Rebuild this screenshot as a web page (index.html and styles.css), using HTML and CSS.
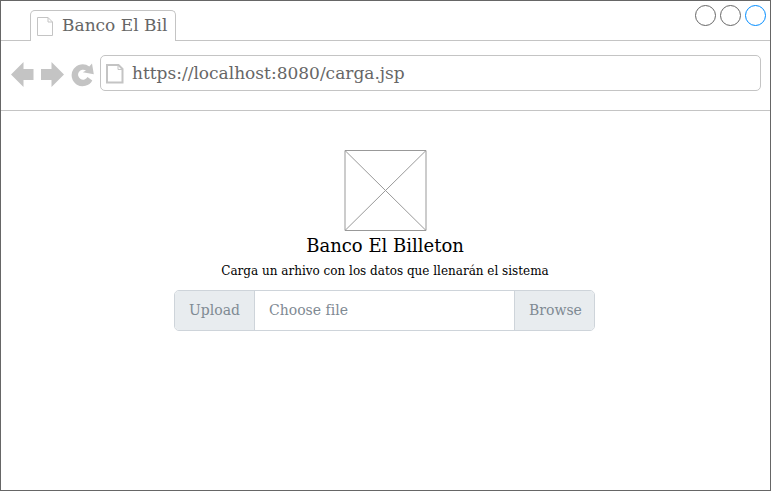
FILE: index.html
```html
<!DOCTYPE html>
<html lang="es">
<head>
<meta charset="utf-8">
<title>Banco El Billeton</title>
<link rel="stylesheet" href="styles.css">
</head>
<body>
<div class="window">
  <header class="tabs">
    <div class="tab">
      <svg class="tab-icon" width="18" height="21" viewBox="0 0 18 21"><path d="M1.500 1.500H12L16.500 6V19.500H1.500ZM12 1.500V6H16.500"/></svg>
      <span>Banco El Bil</span>
    </div>
    <div class="controls"><i></i><i></i><i class="active"></i></div>
  </header>
  <nav class="toolbar">
    <svg class="nav-icons" width="88" height="30" viewBox="8 60 88 30">
      <path d="M11 74.500L23.500 62V69H33.500V80H23.500V87Z"/>
      <path d="M64 74.500L51.500 62V69H41V80H51.500V87Z"/>
      <path d="M92 63.500L93.800 74.200L82.800 72.200L86 70.600A5 5 0 1 0 87.500 77L92.300 80.500A11 11 0 1 1 89.300 66.500Z"/>
    </svg>
    <div class="address">
      <svg class="page-icon" width="19" height="21" viewBox="0 0 19 21"><path d="M2 2H13.500L17.500 6V19.500H2Z"/><path class="fold" d="M13 2V6.500H17"/></svg>
      <span>https://localhost:8080/carga.jsp</span>
    </div>
  </nav>
  <main class="content">
    <svg class="logo" width="84" height="82" viewBox="0 0 84 82"><path d="M2 .5H83V80.500H2ZL83 80.500M83 .5L2 80.500"/></svg>
    <h1>Banco El Billeton</h1>
    <p>Carga un arhivo con los datos que llenarán el sistema</p>
    <div class="upload">
      <div class="addon">Upload</div>
      <div class="file">Choose file</div>
      <div class="addon browse">Browse</div>
    </div>
  </main>
</div>
</body>
</html>
```
FILE: styles.css
```css
* { box-sizing: border-box; }
body { margin: 0; background: #fff; font-family: "DejaVu Serif", serif; }
svg { display: block; flex: none; fill: none; }
.window { width: 771px; height: 491px; border: 1px solid #666; }
.tabs { height: 40px; border-bottom: 1px solid #c4c4c4; display: flex; justify-content: space-between; padding: 9px 4px 0 29px; }
.tab { width: 146px; height: 31px; border: 1px solid #c4c4c4; border-bottom: 0; border-radius: 5px 5px 0 0; background: #fff; display: flex; padding: 5px 0 0 5px; color: #666; font-size: 17px; line-height: 18px; white-space: nowrap; }
.tab span { margin-left: 8px; }
.tab-icon { stroke: #c4c4c4; }
.controls { display: flex; gap: 4px; margin-top: -5px; }
.controls i { width: 21px; height: 21px; border: 1px solid #666; border-radius: 50%; }
.controls .active { border-color: #008cff; }
.toolbar { height: 70px; border-bottom: 1px solid #c4c4c4; display: flex; padding: 14px 9px 0 7px; }
.nav-icons { fill: #c4c4c4; margin: 5px 4px 0 0; }
.address { flex: 1; height: 36px; border: 1px solid #c4c4c4; border-radius: 5px; display: flex; padding: 7px 0 0 4px; color: #666; font-size: 17px; line-height: 21px; }
.address span { margin-left: 8px; }
.page-icon { stroke: #c4c4c4; stroke-width: 2; }
.page-icon .fold { stroke-width: 1; }
.content { display: flex; flex-direction: column; align-items: center; padding: 39px 1px 0 0; }
.logo { stroke: #999; }
h1 { margin: 3px 0 0; font-size: 18px; font-weight: 400; line-height: 22px; }
p { margin: 6px 0 0; font-size: 12px; line-height: 16px; }
.upload { width: 421px; height: 41px; margin: 11px 1px 0 0; border: 1px solid #ced4da; border-radius: 5px; display: flex; overflow: hidden; font-size: 14px; line-height: 38px; color: #7f8a93; }
.addon { width: 79px; padding-left: 14px; background: #e8ecef; }
.file { flex: 1; padding-left: 14px; border: solid #ced4da; border-width: 0 1px; }
```
